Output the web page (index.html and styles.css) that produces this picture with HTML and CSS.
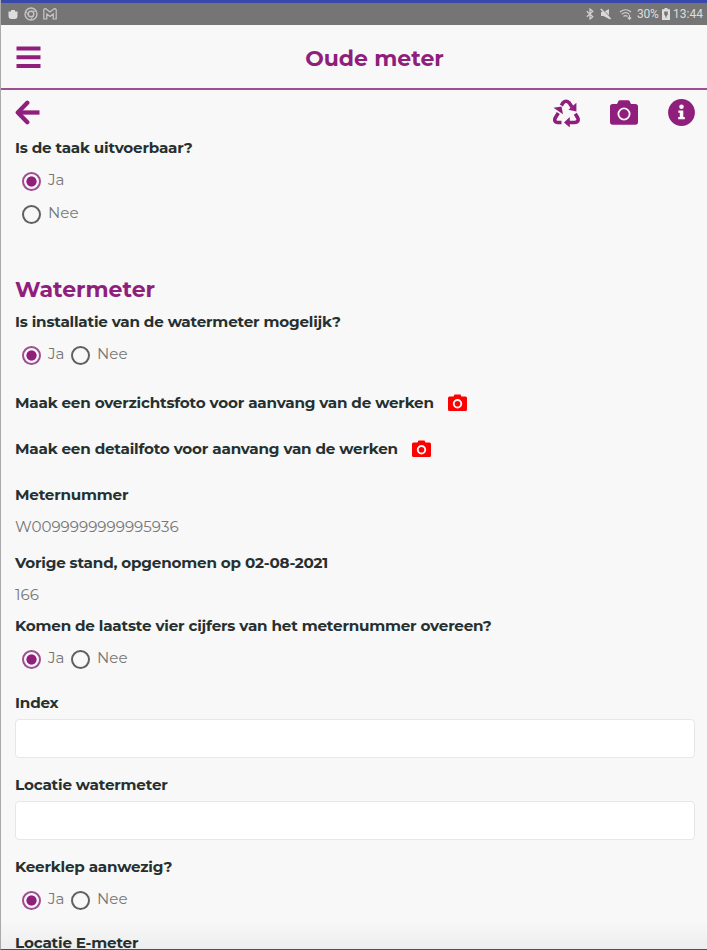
FILE: index.html
```html
<!DOCTYPE html>
<html lang="nl">
<head>
<meta charset="utf-8">
<title>Oude meter</title>
<link rel="stylesheet" href="styles.css">
</head>
<body>
<svg width="0" height="0" class="sprite">
  <symbol id="camera" viewBox="0 0 28 25"><path fill-rule="evenodd" d="M2.700 4H7l1.300-2.800Q8.700.3 9.800.3h8.400q1.100 0 1.500.9L21 4h4.300Q28 4 28 6.600v15.400q0 2.700-2.700 2.700H2.700Q0 24.700 0 22V6.600Q0 4 2.700 4zM14 7.500a6.500 6.500 0 1 0 0 13 6.500 6.500 0 0 0 0-13zm0 1.800a4.700 4.700 0 1 1 0 9.400 4.700 4.700 0 0 1 0-9.400z"/></symbol>
  <symbol id="camera-small" viewBox="0 0 19 17"><path fill-rule="evenodd" d="M1.500 2.500h4L6.500.5h6l1 2h4q1.500 0 1.500 1.500v11.500q0 1.500-1.500 1.500h-16Q0 17 0 15.500V4q0-1.500 1.500-1.500zM9.500 5a4.700 4.700 0 1 0 0 9.400 4.700 4.700 0 0 0 0-9.400zm0 1.900a2.800 2.800 0 1 1 0 5.600 2.800 2.800 0 0 1 0-5.600z"/></symbol>
</svg>
<div class="screen">
  <div class="status">
    <div class="status-left">
      <svg width="10" height="12" viewBox="0 0 10 12"><path d="M.5 3.500h9v4.500q0 3-3 3h-3q-3 0-3-3zM3 4V2h4v2" fill="#ddd"/></svg>
      <svg width="14" height="14" viewBox="0 0 14 14" fill="none" stroke="#c4c4c4" stroke-width="1.400"><circle cx="7" cy="7" r="6"/><circle cx="7" cy="7" r="2.800"/><path d="M7 4.200h5.300M4.500 8.500 2 4.500M9.400 8.500l-2.600 4.400" stroke-width="1"/></svg>
      <svg class="mail" width="14" height="12" viewBox="0 0 14 12" fill="none" stroke="#c8c8c8" stroke-width="1.200"><path d="M.8 1.500V11h3V6L7 8.500 10.200 6v5h3V1.500Q12-.2 10.200 1.500L7 4 3.800 1.500Q2-.2.8 1.500z"/></svg>
    </div>
    <div class="status-right">
      <svg width="8" height="12" viewBox="0 0 8 12" fill="none" stroke="#d4d4d4" stroke-width="1.200"><path d="m.8 3.200 6 5.500L4 11V1l2.800 2.300-6 5.500"/></svg>
      <svg class="mute" width="12" height="12" viewBox="0 0 12 12"><path d="M1 4h2.500L9 1v10L3.500 8H1z" fill="#d8d8d8"/><path d="m1.800.4 9.800 10" stroke="#777" stroke-width="1"/><path d="m.8 1 9.800 10" stroke="#d8d8d8" stroke-width="1.500"/></svg>
      <svg class="wifi" width="15" height="12" viewBox="0 0 15 12" fill="none" stroke="#cfcfcf" stroke-width="1.200"><path d="M1 4q5.500-4.500 11 0M2.800 6.200q3.700-3 7.400 0M4.500 8.400q2-1.500 4 0M10.500 7v4M8.800 9.500l1.700 1.700 1.700-1.700"/></svg>
      <span class="pct">30%</span>
      <svg class="battery" width="8" height="12" viewBox="0 0 8 12"><path d="M2.500 0h3v1.300H8V12H0V1.300h2.500z" fill="#ddd"/><path d="M2.200 3.500h3.600v3L4.500 8.200v1.500h-1V8.200L2.200 6.500z" fill="#777"/></svg>
      <span class="clock">13:44</span>
    </div>
  </div>
  <header class="header">
    <svg class="menu" width="25" height="23" viewBox="0 0 25 23"><path d="M.5 2.500h24M.5 11.300h24M.5 20h24" stroke="#8f1e7c" stroke-width="4"/></svg>
    <h1>Oude meter</h1>
  </header>
  <nav class="toolbar">
    <svg class="back" width="25" height="25" viewBox="0 0 25 25" fill="none" stroke="#8f1e7c" stroke-width="4.300"><path d="M12.300 2.700 2.800 12.500l9.500 9.800" stroke-linecap="round" stroke-linejoin="round"/><path d="M3.500 12.500h21"/></svg>
    <div class="actions">
      <svg width="28" height="28" viewBox="0 0 28 28" fill="none" stroke="#8f1e7c" stroke-width="3.600">
        <path d="M9.300 6.500 11 3.800Q14 .6 17.200 3.800L20 8M6.300 14l-3 4.800Q1.500 23 5.500 23.500H9.500M17 23.500h5.300Q27.500 23 25.700 18.800l-2.400-4"/>
        <path d="M24.400 3.800v8.600l-8-1.700zM1.500 8.800l8-1.300 1.500 7.800zM12 23.500l5.800-5.500V28.500z" fill="#8f1e7c" stroke="none"/>
      </svg>
      <svg width="28" height="25" fill="#8f1e7c"><use href="#camera"/></svg>
      <svg width="27" height="27" viewBox="0 0 27 27"><circle cx="13.500" cy="13.500" r="13.400" fill="#8f1e7c"/><circle cx="13.500" cy="7.800" r="2.300" fill="#f8f8f8"/><path d="M10.300 11.400h5v6.500h1.500v2.300h-6.600v-2.300h1.600v-4.200h-1.500z" fill="#f8f8f8"/></svg>
    </div>
  </nav>
  <main class="form">
    <p class="q">Is de taak uitvoerbaar?</p>
    <div class="opts"><i class="radio on"></i><span class="ja">Ja</span></div>
    <div class="opts"><i class="radio"></i><span>Nee</span></div>
    <h2>Watermeter</h2>
    <p class="q tight">Is installatie van de watermeter mogelijk?</p>
    <div class="opts"><i class="radio on"></i><span class="ja">Ja</span><i class="radio"></i><span>Nee</span></div>
    <p class="q photo first-photo">Maak een overzichtsfoto voor aanvang van de werken<svg width="19" height="17" fill="#f00"><use href="#camera-small"/></svg></p>
    <p class="q photo">Maak een detailfoto voor aanvang van de werken<svg width="19" height="17" fill="#f00"><use href="#camera-small"/></svg></p>
    <p class="q photo">Meternummer</p>
    <p class="value">W0099999999995936</p>
    <p class="q reading">Vorige stand, opgenomen op 02-08-2021</p>
    <p class="value">166</p>
    <p class="q check">Komen de laatste vier cijfers van het meternummer overeen?</p>
    <div class="opts"><i class="radio on"></i><span class="ja">Ja</span><i class="radio"></i><span>Nee</span></div>
    <p class="q index">Index</p>
    <input class="field" type="text">
    <p class="q after">Locatie watermeter</p>
    <input class="field" type="text">
    <p class="q after">Keerklep aanwezig?</p>
    <div class="opts"><i class="radio on"></i><span class="ja">Ja</span><i class="radio"></i><span>Nee</span></div>
    <p class="q last">Locatie E-meter</p>
  </main>
</div>
</body>
</html>
```
FILE: styles.css
```css
* { box-sizing: border-box; }
body { margin: 0; background: #f8f8f8; color: #263030; font-family: Montserrat, Inter, sans-serif; }
svg { display: block; flex: none; }
.sprite { position: absolute; }
.screen { height: 950px; overflow: hidden; border-left: 1px solid #aaa; border-bottom: 1px solid #3d4a9c; background: linear-gradient(#f8f8f8 920px, #ededed 950px); }
.status { height: 25px; border-top: 3px solid #3949ab; background: #757575; display: flex; justify-content: space-between; align-items: center; padding: 0 4px 0 7px; color: #ddd; font: 12px Roboto, sans-serif; }
.status-left, .status-right { display: flex; align-items: center; }
.status-left { gap: 6px; }
.mail { margin-left: -1px; }
.mute { margin-left: 6px; }
.wifi { margin: 0 3px 0 7px; }
.pct { width: 21px; letter-spacing: -0.35px; white-space: nowrap; }
.battery { margin: 0 3px 0 4px; }
.header { height: 65px; border-bottom: 2px solid #a0508f; display: flex; align-items: center; padding: 2px 0 0 15px; }
h1, h2 { margin: 0; color: #8f1e7c; font-size: 22px; line-height: 36px; font-weight: 700; }
h1 { flex: 1; padding: 2px 0 0 1px; text-align: center; }
.toolbar { height: 45px; display: flex; justify-content: space-between; align-items: center; padding: 0 12px 0 14px; }
.actions { display: flex; align-items: center; gap: 30px; }
.form { padding: 0 12px 0 14px; }
.q, .value { margin: 0; height: 24px; line-height: 25px; white-space: nowrap; display: flex; }
.q { font-size: 15.200px; letter-spacing: -0.2px; font-weight: 700; }
.value { margin-top: 8px; font-size: 15.100px; color: #777; line-height: 26px; }
.opts { height: 24px; margin-top: 9px; padding-left: 7px; display: flex; line-height: 24px; font-size: 15.100px; color: #777; }
.radio { width: 19px; height: 19px; border: 2px solid #606060; border-radius: 50%; margin: 4px 7px 0 0; }
.radio.on { border-color: #a04c91; background: radial-gradient(circle, #8f1e7c 4.700px, transparent 5.500px); }
.ja { width: 23px; }
h2 { padding-top: 1px; height: 36px; margin-top: 46px; }
.tight { margin-top: 2px; }
.photo { margin-top: 22px; }
.photo svg { margin: 4px 0 0 14px; }
.first-photo { margin-top: 24px; }
.reading { margin-top: 12px; }
.check { margin-top: 7px; }
.index { margin-top: 20px; }
.field { display: block; width: 100%; height: 39px; margin: 5px 0 0; border: 1px solid #e4e8e7; border-radius: 4px; background: #fff; }
.after { margin-top: 14px; }
.last { margin-top: 19px; }
```
